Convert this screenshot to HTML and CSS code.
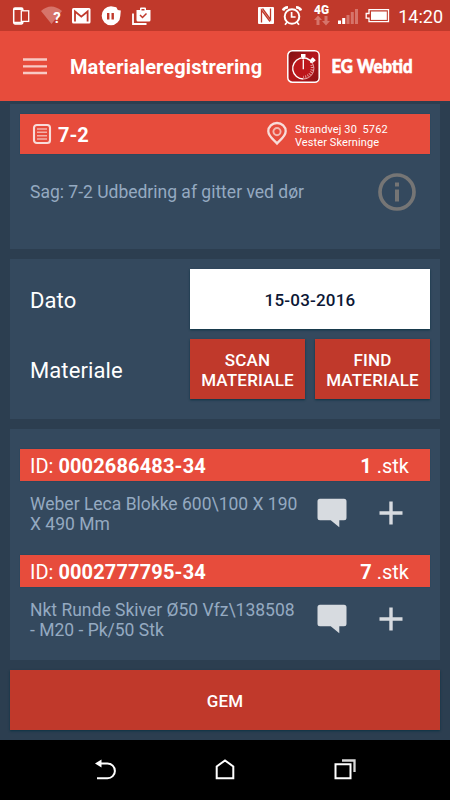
FILE: index.html
```
<!doctype html>
<html lang="da">

<head>
    <meta charset="UTF-8" />
    <meta name="viewport" content="width=device-width, initial-scale=1.0" />
    <title>Materialeregistrering</title>
    <link rel="stylesheet" href="styles.css">
</head>

<body>
    <svg class="symbols">
        <symbol id="icon-comment" viewBox="0 0 30 30">
            <path d="M3 .8h24a2.5 2.5 0 0 1 2.5 2.5v16.4a2.5 2.5 0 0 1-2.5 2.5h-4.700v7l-8.600-7H3a2.5 2.5 0 0 1-2.5-2.5V3.300a2.500 2.500 0 0 1 2.500-2.500z" fill="#d7dbe0" />
        </symbol>
        <symbol id="icon-plus" viewBox="0 0 24 24">
            <path d="M.5 12h23M12 .5v23" stroke="#d7dbe0" stroke-width="3.400" />
        </symbol>
    </svg>

    <div class="app">
        <div class="status">
            <div class="status__left">
                <svg width="20" height="20" viewBox="0 0 20 20" fill="none" stroke="#fff">
                    <rect x="1.700" y="1.900" width="9.100" height="16" rx="1.300" stroke-width="1.500" />
                    <path d="M2 3h8.500M2 16.700h8.500" stroke-width="2" />
                    <rect x="9.300" y="4.800" width="7.400" height="10.600" fill="#c0392b" stroke-width="1.300" />
                </svg>
                <svg width="20" height="20" viewBox="0 0 20 20">
                    <path d="M-1 5Q9-4 20 5L9.500 18z" fill="#d6746a" />
                    <text class="status__question" x="11.300" y="16.800">?</text>
                </svg>
                <svg width="20" height="20" viewBox="0 0 20 20">
                    <rect x="0" y="2" width="18.500" height="15.500" rx="1.500" fill="#fff" />
                    <path d="M3 15.500V5.500l6.300 5.200 6.300-5.200v10" fill="none" stroke="#c0392b" stroke-width="1.800" />
                </svg>
                <svg width="20" height="20" viewBox="0 0 20 20">
                    <path d="M9 .3a9.300 9.500 0 1 0 9.300 9.600l.5-5.500-3-.5-1.500-2.700z" fill="#fff" />
                    <path d="M6.200 7v6.500M10.700 7v6.500" stroke="#c0392b" stroke-width="2.400" />
                </svg>
                <svg width="20" height="20" viewBox="0 0 20 20">
                    <path d="M1 7.500V18h13.500" fill="none" stroke="#fff" stroke-width="1.800" />
                    <path d="M4.500 4h3.500V2.500Q8 1.500 9 1.500h4q1 0 1 1V4h4.500v10q0 1.500-1.500 1.500H6Q4.500 15.500 4.500 14z" fill="#fff" />
                    <path d="M9.500 3.700h3M8 9l2.500 2.500 4-4" fill="none" stroke="#c0392b" stroke-width="1.500" />
                </svg>
            </div>
            <div class="status__right">
                <svg width="18" height="20" viewBox="0 0 18 20">
                    <rect x="1" y="1" width="16" height="17" rx="1" fill="#fff" />
                    <path d="M4.500 16.500V4l8.500 11.500M5.500 2.500l8 11V2.500" fill="none" stroke="#c0392b" stroke-width="1.300" />
                </svg>
                <svg width="20" height="20" viewBox="0 0 20 20" fill="none" stroke="#fff" stroke-width="2">
                    <circle cx="10" cy="10.500" r="7.300" />
                    <path d="M1 4.500Q2 1.500 6 1.300M19 4.500Q18 1.500 14 1.300" stroke-width="2.500" />
                    <path d="M9.600 6v5h4M5 16.300l-2 2.500M15 16.300l2 2.500" stroke-width="1.700" />
                </svg>
                <svg class="status__network" width="16" height="22" viewBox="0 0 16 22">
                    <text class="status__network-text" x="0" y="8.800" textLength="15" lengthAdjust="spacingAndGlyphs">4G</text>
                    <path d="M4 10.500l4 4.500H5.500v5h-3v-5H0zM12 20.500L8 16h2.500v-5h3v5H16z" fill="#d6746a" />
                </svg>
                <svg width="20" height="20" viewBox="0 0 20 20">
                    <path d="M0 14.500h3V18H0zM4.200 12h3v6h-3z" fill="#fff" />
                    <path d="M8.500 9h3v9h-3zM12.800 6h3v12h-3zM17 3h3v15h-3z" fill="#d6746a" />
                </svg>
                <svg class="status__battery" width="25" height="20" viewBox="0 0 25 20">
                    <path d="M4 3.700h19.500v12H4v-3.500H1.200V7.500H4z" fill="none" stroke="#fff" stroke-width="1.300" />
                    <path d="M6 5.500h15.800v8.400H6z" fill="#fff" />
                </svg>
                <span class="status__time">14:20</span>
            </div>
        </div>

        <header class="header">
            <svg class="header__menu" width="24" height="17" viewBox="0 0 24 17">
                <path d="M0 1.500h24M0 8.300h24M0 15h24" stroke="#f8c9c4" stroke-width="2.300" />
            </svg>
            <h1 class="header__title">Materialeregistrering</h1>
            <svg class="header__logo" width="33" height="33" viewBox="0 0 33 33">
                <defs>
                    <linearGradient id="logo-bg" x1="0" y1="0" x2="1" y2="1">
                        <stop offset="0" stop-color="#7d1014" />
                        <stop offset=".5" stop-color="#b5161b" />
                        <stop offset="1" stop-color="#8b1115" />
                    </linearGradient>
                </defs>
                <rect x=".8" y=".8" width="31.400" height="31.400" rx="4.500" fill="url(#logo-bg)" stroke="#fff" stroke-width="1.500" />
                <circle cx="16.300" cy="18.500" r="10.600" fill="#bd171c" />
                <path d="M25.500 13.200A10.600 10.600 0 1 0 16.300 29" fill="none" stroke="#fff" stroke-width="1.400" />
                <path d="M25.500 13.200A10.600 10.600 0 0 1 16.300 29" fill="none" stroke="#e8b0b0" stroke-width="1" />
                <path d="M24.500 15A9 9 0 0 1 16.300 27" fill="none" stroke="#e8b0b0" stroke-width="2.500" stroke-dasharray=".8 1.500" />
                <path d="M14 4h4.500v3h-1v2h-2.500V7h-1zM23.300 9.500l2.500-2.300 3 3-2.500 2.300-1-1-1.500 1.500-1-1 1.300-1.500z" fill="#fff" />
                <path d="M16.300 9.500v9.700" stroke="#fff" stroke-width="1.300" />
            </svg>
            <svg class="header__brand" width="84" height="24" viewBox="0 0 84 24">
                <text class="header__brand-text" x="1.500" y="19.300" textLength="81" lengthAdjust="spacingAndGlyphs">EG Webtid</text>
            </svg>
        </header>

        <main class="content">
            <section class="card card--case">
                <div class="bar bar--case">
                    <svg width="18" height="20" viewBox="0 0 18 20" fill="none" stroke="#f8dcd9">
                        <rect x="1" y="1" width="16" height="18" rx="2.800" stroke-width="2.100" />
                        <path d="M4 5h10M4 8.300h10M4 11.700h10M4 15h10" stroke="#f3b0a8" stroke-width="1.500" />
                    </svg>
                    <span class="bar__case">7-2</span>
                    <svg class="bar__pin" width="20" height="23" viewBox="0 0 20 23" fill="none" stroke="#f8dcd9">
                        <path d="M10 21.500C7.500 18.500 1.300 14.500 1.300 9.300a8.700 8.300 0 0 1 17.400 0c0 5.200-6.200 9.200-8.700 12.200z" stroke-width="2.300" />
                        <circle cx="10" cy="9.600" r="3.600" stroke="#f3b8b1" stroke-width="1.900" />
                    </svg>
                    <span class="bar__address">Strandvej 30&nbsp; 5762<br>Vester Skerninge</span>
                </div>
                <div class="case">
                    <p class="case__text">Sag: 7-2 Udbedring af gitter ved dør</p>
                    <svg width="38" height="38" viewBox="0 0 38 38">
                        <circle cx="19" cy="19" r="17" fill="none" stroke="#757575" stroke-width="3.700" />
                        <path d="M17 9.500h4v4h-4zM17 16.500h4v12h-4z" fill="#757575" />
                    </svg>
                </div>
            </section>

            <section class="card card--form">
                <span class="label">Dato</span>
                <button class="button button--date">15-03-2016</button>
                <span class="label">Materiale</span>
                <button class="button">SCAN<br>MATERIALE</button>
                <button class="button">FIND<br>MATERIALE</button>
            </section>

            <section class="card card--list">
                <div class="item">
                    <div class="bar">
                        <span>ID: <b class="bar__id">0002686483-34</b></span>
                        <span><b>1</b> .stk</span>
                    </div>
                    <div class="item__body">
                        <p class="item__text">Weber Leca Blokke 600\100 X 190 X 490 Mm</p>
                        <svg class="item__comment" width="30" height="30"><use href="#icon-comment" /></svg>
                        <svg class="item__plus" width="24" height="24"><use href="#icon-plus" /></svg>
                    </div>
                </div>
                <div class="item">
                    <div class="bar">
                        <span>ID: <b class="bar__id">0002777795-34</b></span>
                        <span><b>7</b> .stk</span>
                    </div>
                    <div class="item__body">
                        <p class="item__text">Nkt Runde Skiver Ø50 Vfz\138508 - M20 - Pk/50 Stk</p>
                        <svg class="item__comment" width="30" height="30"><use href="#icon-comment" /></svg>
                        <svg class="item__plus" width="24" height="24"><use href="#icon-plus" /></svg>
                    </div>
                </div>
            </section>

            <button class="button button--save">GEM</button>
        </main>

        <nav class="nav">
            <svg width="24" height="24" viewBox="0 0 24 24">
                <path d="M6 5.500h8.500a7.300 7.300 0 0 1 0 14.800H4" fill="none" stroke="#fff" stroke-width="2" />
                <path d="M2 5.500L8.500 1.500v8z" fill="#fff" />
            </svg>
            <svg width="24" height="24" viewBox="0 0 24 24">
                <path d="M3.700 20.300V8.500L12 2.400l8.300 6.100v11.800z" fill="none" stroke="#fff" stroke-width="2" />
            </svg>
            <svg width="24" height="24" viewBox="0 0 24 24" fill="none" stroke="#fff" stroke-width="2">
                <path d="M2.500 6.200h15v14h-15z" />
                <path d="M9 2.500h12.500v11.500" stroke="#d8d8d8" stroke-width="2.300" />
            </svg>
        </nav>
    </div>
</body>

</html>
```
FILE: styles.css
```
* {
    margin: 0;
    padding: 0;
    box-sizing: border-box;
}

body {
    background-color: #2c3e50;
    color: #fff;
    font-family: Roboto, sans-serif;
    font-size: 18px;
}

svg {
    display: block;
    flex-shrink: 0;
    overflow: visible;
}

.symbols {
    position: absolute;
    width: 0;
    height: 0;
}

.app {
    width: 450px;
    height: 800px;
    display: flex;
    flex-direction: column;
}

.status {
    height: 31px;
    background-color: #c0392b;
    display: flex;
    justify-content: space-between;
    padding: 6px 7px 0 12px;
}

.status__left {
    display: flex;
    gap: 10px;
}

.status__right {
    display: flex;
    gap: 7px;
}

.status__question {
    fill: #fff;
    font-size: 15px;
    font-weight: bold;
}

.status__network {
    margin: -1px 1px 0 5px;
}

.status__network-text {
    fill: #fff;
    font-size: 12px;
    font-weight: 900;
}

.status__battery {
    margin-right: 1px;
}

.status__time {
    font-size: 18px;
    line-height: 21px;
}

.header {
    height: 70px;
    background-color: #e74c3c;
    display: flex;
    align-items: center;
    padding-left: 23px;
}

.header__menu {
    margin-right: 23px;
}

.header__title {
    width: 217px;
    padding-top: 1px;
    font-size: 20px;
    font-weight: bold;
    letter-spacing: 0.1px;
    white-space: nowrap;
}

.header__logo {
    margin-right: 10px;
}

.header__brand-text {
    fill: #fff;
    stroke: #fff;
    stroke-width: 0.6px;
    font-family: Lato, sans-serif;
    font-size: 19px;
    font-weight: 900;
}

.content {
    flex: 1;
    display: flex;
    flex-direction: column;
    gap: 10px;
    padding: 3px 10px 0;
}

.card {
    background-color: #34495e;
    padding: 10px;
}

.card--case {
    height: 145px;
}

.card--form {
    height: 160px;
    display: grid;
    grid-template-columns: 160px 115px 115px;
    grid-template-rows: 60px 60px;
    column-gap: 10px;
    row-gap: 10px;
    align-items: center;
}

.card--list {
    height: 231px;
    padding-top: 20px;
}

.bar {
    height: 32px;
    background-color: #e74c3c;
    box-shadow: 0 0 1px #17455b;
    display: flex;
    align-items: center;
    justify-content: space-between;
    padding: 2px 21px 0 10px;
    font-size: 20px;
}

.bar--case {
    height: 40px;
    justify-content: flex-start;
    padding: 0 0 0 13px;
}

.bar__case {
    width: 191px;
    margin-left: 7px;
    padding-top: 2px;
    font-weight: bold;
}

.bar__id {
    letter-spacing: 0.15px;
}

.bar__pin {
    margin: -1px 0 0 18px;
}

.bar__address {
    margin-left: 8px;
    padding-top: 3px;
    font-size: 11px;
    line-height: 13px;
    letter-spacing: 0.1px;
}

.case {
    display: flex;
    align-items: center;
    justify-content: space-between;
    padding: 19px 14px 0 10px;
}

.case__text,
.item__text {
    color: #95aac1;
    font-size: 17.5px;
}

.label {
    padding: 2px 0 0 10px;
    font-size: 22px;
    letter-spacing: 0.1px;
}

.button {
    height: 60px;
    padding-top: 2px;
    border: none;
    background-color: #c0392b;
    box-shadow: 0 1px 2px #0c3444;
    color: #fff;
    font-family: inherit;
    font-size: 17px;
    font-weight: 500;
    line-height: 20px;
    letter-spacing: 0.2px;
}

.button--date {
    grid-column: span 2;
    background-color: #fff;
    color: #0c1735;
}

.item {
    height: 105.5px;
}

.item__body {
    display: flex;
    padding: 13px 0 0 10px;
}

.item__text {
    width: 270px;
    line-height: 20px;
}

.item__comment {
    margin: 4px 0 0 17px;
}

.item__plus {
    margin: 7px 0 0 32px;
}

.nav {
    height: 60px;
    background-color: #000;
    display: flex;
    justify-content: center;
    align-items: center;
    gap: 96px;
}
```
